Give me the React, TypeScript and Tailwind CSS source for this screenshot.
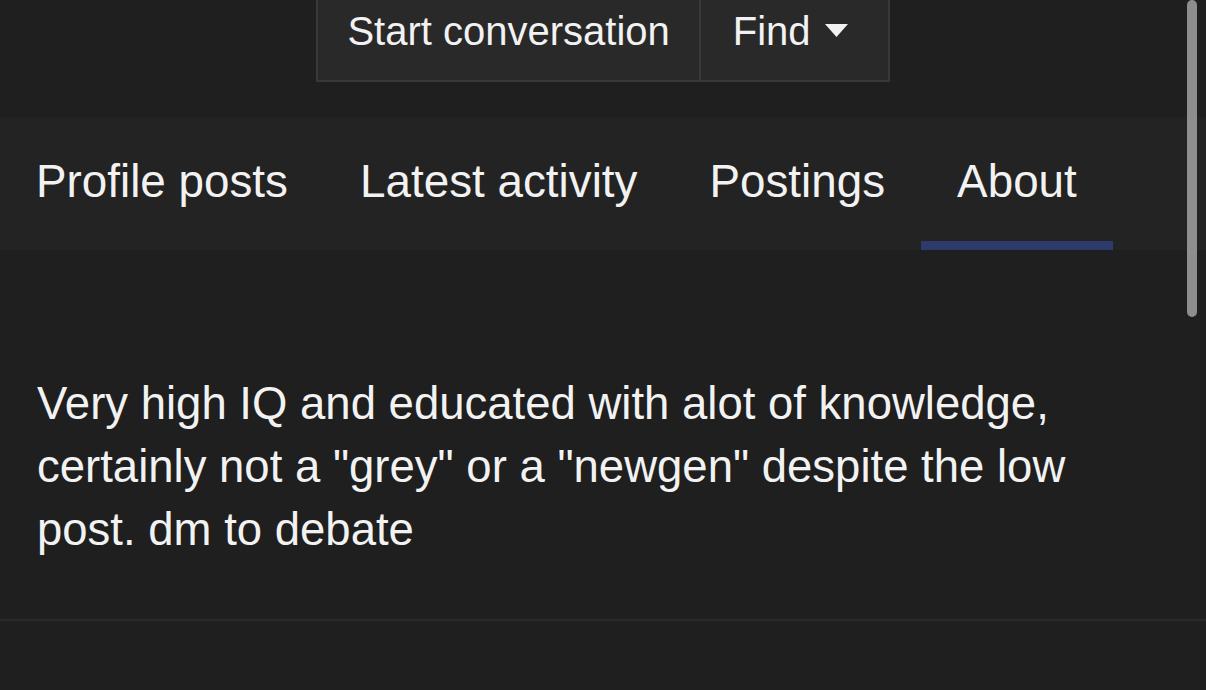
export default function App() {
  const tabs = ["Profile posts", "Latest activity", "Postings", "About"];
  return (
    <div
      className="relative h-[690px] w-[1206px] overflow-hidden bg-[#1f1f1f] text-[#f2f2f2]"
      style={{ fontFamily: '"Liberation Sans", Arial, sans-serif' }}
    >
      <div className="flex h-[117px] justify-center">
        <div className="-mt-[2px] flex h-[84px] border-2 border-t-0 border-[#383838] bg-[#292929] text-[40px]">
          <div className="flex items-start px-[29px] pt-[3px]">Start conversation</div>
          <div className="flex items-start border-l-2 border-[#383838] pr-[40px] pl-[32px] pt-[3px]">
            Find
            <svg width="23" height="13" viewBox="0 0 23 13" className="mt-[23px] ml-[14px]">
              <path d="M0 0h23L11.5 13z" fill="#f2f2f2" />
            </svg>
          </div>
        </div>
      </div>

      <div className="flex h-[133px] bg-[#232323]">
        {tabs.map((t) => (
          <div
            key={t}
            className={
              t === "About"
                ? "flex items-start border-b-[9px] border-[#2d3a6c] px-[36px] pt-[31px] text-[45.8px]"
                : "flex items-start border-b-[9px] border-transparent px-[36px] pt-[31px] text-[45.8px]"
            }
          >
            {t}
          </div>
        ))}
      </div>

      <div className="border-b-2 border-[#2a2a2a] px-[37px] pt-[122px] pb-[58px] text-[45.5px] leading-[63px]">
        Very high IQ and educated with alot of knowledge,
        <br />
        certainly not a "grey" or a "newgen" despite the low
        <br />
        post. dm to debate
      </div>

      <div className="absolute top-0 right-[9px] h-[317px] w-[10px] rounded-full bg-[#8e8e8e]" />
    </div>
  );
}
